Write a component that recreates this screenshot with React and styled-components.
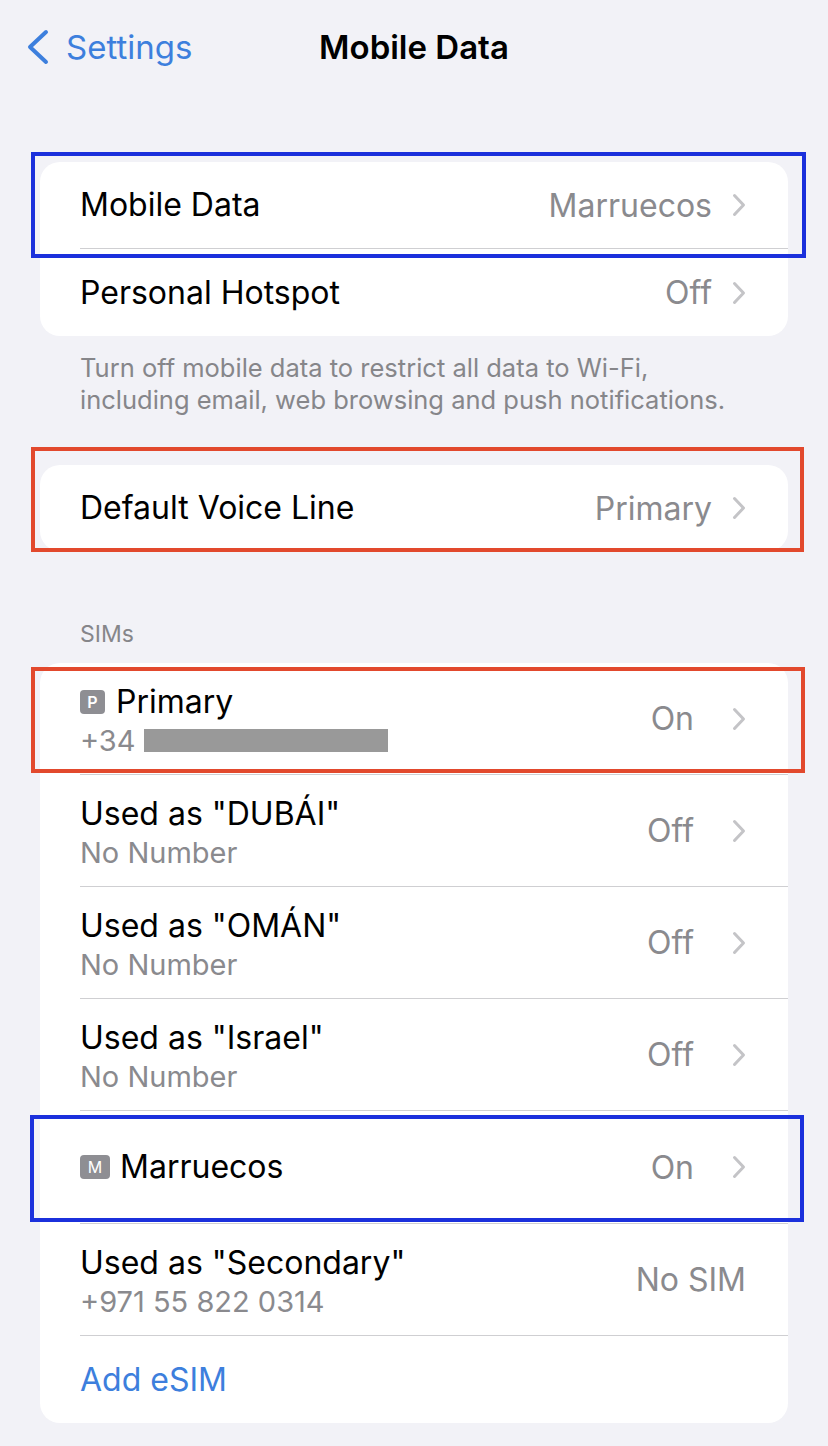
import styled, { createGlobalStyle, css } from 'styled-components';

const GlobalStyle = createGlobalStyle`
    html, body {
        margin: 0;
        padding: 0;
        background: #f2f2f7;
    }
    body {
        font-family: Inter, "Noto Sans", "Liberation Sans", sans-serif;
        -webkit-font-smoothing: antialiased;
    }
`;

// annotation frames drawn over some rows (offsets from the row edges)
const marks = {
    blueTop: { color: '#1b30dc', top: -10, bottom: -9, left: -9, right: -18 },
    redVoice: { color: '#e2492d', top: -18, bottom: -1, left: -9, right: -16 },
    redPrimary: { color: '#e2492d', top: 4, bottom: 2, left: -9, right: -17 },
    blueMorocco: { color: '#1b30dc', top: 4, bottom: 2, left: -10, right: -16 },
};

const Chevron = ({ color = '#c4c4c7', w = 14, h = 24, stroke = 3, left = false }) => {
    const a = stroke / 2 + 1;
    const b = w - stroke / 2 - 1;
    const d = left
        ? `M${b} ${a} L${a} ${h / 2} L${b} ${h - a}`
        : `M${a} ${a} L${b} ${h / 2} L${a} ${h - a}`;
    return (
        <svg width={w} height={h} viewBox={`0 0 ${w} ${h}`} fill="none">
            <path d={d} stroke={color} strokeWidth={stroke} strokeLinecap="round" strokeLinejoin="round" />
        </svg>
    );
};

const SettingsRow = ({ title, subtitle, value, badge, chevron = true, mark, last, height = 87, link, sim, children }) => (
    <Row $mark={mark} $height={height}>
        <RowInner $last={last}>
            <Labels>
                <Title $link={link}>
                    {badge && <Badge $wide={badge === 'M'}>{badge}</Badge>}
                    {title}
                </Title>
                {subtitle && <Subtitle>{subtitle}{children}</Subtitle>}
            </Labels>
            {value && <Value>{value}</Value>}
            {chevron && (
                <ChevronWrap $sim={sim}>
                    <Chevron />
                </ChevronWrap>
            )}
        </RowInner>
    </Row>
);

const App = () => {
    return (
        <>
            <GlobalStyle />
            <Page>
                <Nav>
                    <Back>
                        <Chevron color="#3d7fdd" w={22} h={36} stroke={4} left />
                        <span>Settings</span>
                    </Back>
                    <NavTitle>Mobile Data</NavTitle>
                </Nav>

                <Card $top={68}>
                    <SettingsRow title="Mobile Data" value="Marruecos" mark={marks.blueTop} />
                    <SettingsRow title="Personal Hotspot" value="Off" last />
                </Card>
                <Footer>
                    Turn off mobile data to restrict all data to Wi-Fi,
                    <br />
                    including email, web browsing and push notifications.
                </Footer>

                <Card $top={49}>
                    <SettingsRow title="Default Voice Line" value="Primary" mark={marks.redVoice} last height={86} />
                </Card>

                <SectionHeader>SIMs</SectionHeader>
                <Card $top={0}>
                    <SettingsRow
                        title="Primary"
                        badge="P"
                        subtitle="+34 "
                        value="On"
                        mark={marks.redPrimary}
                        height={112}
                        sim
                    >
                        <Redacted />
                    </SettingsRow>
                    <SettingsRow title={'Used as "DUBÁI"'} subtitle="No Number" value="Off" height={112} sim />
                    <SettingsRow title={'Used as "OMÁN"'} subtitle="No Number" value="Off" height={112} sim />
                    <SettingsRow title={'Used as "Israel"'} subtitle="No Number" value="Off" height={112} sim />
                    <SettingsRow title="Marruecos" badge="M" value="On" mark={marks.blueMorocco} height={113} sim />
                    <SettingsRow
                        title={'Used as "Secondary"'}
                        subtitle="+971 55 822 0314"
                        value="No SIM"
                        chevron={false}
                        height={112}
                    />
                    <SettingsRow title="Add eSIM" link chevron={false} last height={87} />
                </Card>
            </Page>
        </>
    );
};

const Page = styled.div`
    width: 828px;
    min-height: 1446px;
    background: #f2f2f7;
    padding: 0 40px 24px;
    box-sizing: border-box;
`;

const Nav = styled.div`
    height: 94px;
    display: flex;
    align-items: center;
    justify-content: center;
    position: relative;
`;

const Back = styled.div`
    position: absolute;
    left: -13px;
    top: 29px;
    display: flex;
    align-items: center;
    gap: 17px;
    color: #3d7fdd;
    font-size: 33px;

    span {
        line-height: 36px;
    }
`;

const NavTitle = styled.div`
    font-size: 33px;
    font-weight: 600;
    color: #000;
`;

const Card = styled.div`
    margin-top: ${(p) => p.$top}px;
    background: #fff;
    border-radius: 20px;
    position: relative;
`;

const Row = styled.div`
    position: relative;
    height: ${(p) => p.$height}px;
    padding-left: 40px;
    display: flex;

    ${(p) =>
        p.$mark &&
        css`
            &::after {
                content: '';
                position: absolute;
                top: ${p.$mark.top}px;
                bottom: ${p.$mark.bottom}px;
                left: ${p.$mark.left}px;
                right: ${p.$mark.right}px;
                border: 4px solid ${p.$mark.color};
                z-index: 2;
                pointer-events: none;
            }
        `}
`;

const RowInner = styled.div`
    flex: 1;
    display: flex;
    align-items: center;
    padding-right: 42px;
    border-bottom: ${(p) => (p.$last ? 'none' : '1px solid #cfcfd2')};
`;

const Labels = styled.div`
    flex: 1;
    display: flex;
    flex-direction: column;
`;

const Title = styled.div`
    display: flex;
    align-items: center;
    font-size: 32px;
    line-height: 44px;
    color: ${(p) => (p.$link ? '#3d7fdd' : '#000')};
`;

const Subtitle = styled.div`
    display: flex;
    align-items: center;
    font-size: 29px;
    line-height: 34px;
    color: #8a8a8e;
    white-space: pre;
`;

const Redacted = styled.span`
    display: inline-block;
    width: 244px;
    height: 23px;
    background: #999999;
`;

const Badge = styled.span`
    display: inline-flex;
    align-items: center;
    justify-content: center;
    width: ${(p) => (p.$wide ? 30 : 25)}px;
    height: 24px;
    margin-right: ${(p) => (p.$wide ? 10 : 11)}px;
    border-radius: 4px;
    background: #8e8e93;
    color: #fff;
    font-size: 16px;
    font-weight: ${(p) => (p.$wide ? 400 : 600)};
`;

const Value = styled.div`
    font-size: 32px;
    color: #8a8a8e;
`;

const ChevronWrap = styled.div`
    display: flex;
    margin-left: ${(p) => (p.$sim ? 38 : 20)}px;
`;

const Footer = styled.div`
    padding: 16px 40px 0;
    font-size: 25.5px;
    line-height: 32px;
    color: #86868a;
`;

const SectionHeader = styled.div`
    margin-top: 69px;
    padding: 0 40px;
    height: 43px;
    font-size: 23px;
    line-height: 28px;
    color: #86868a;
`;

export default App;
